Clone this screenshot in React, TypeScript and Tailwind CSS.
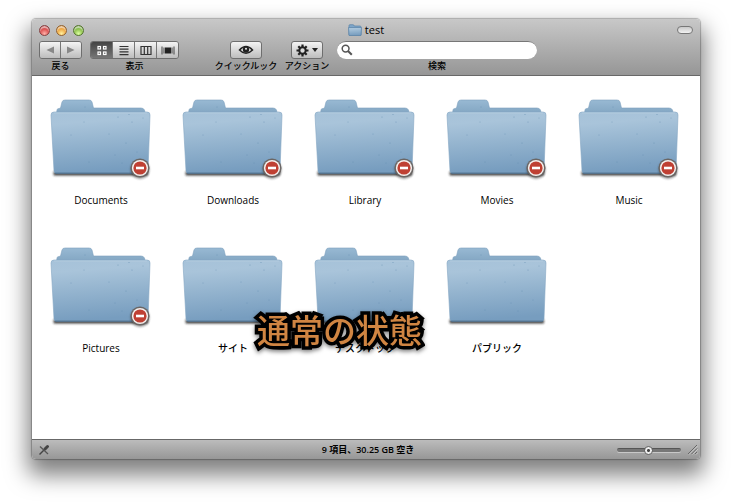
import type { ReactNode } from 'react';

type Item = { name: string; locked?: boolean };

const items: Item[] = [
  { name: 'Documents', locked: true },
  { name: 'Downloads', locked: true },
  { name: 'Library', locked: true },
  { name: 'Movies', locked: true },
  { name: 'Music', locked: true },
  { name: 'Pictures', locked: true },
  { name: 'サイト' },
  { name: 'デスクトップ' },
  { name: 'パブリック' },
];

const buttonLook =
  'flex h-[18px] items-center justify-center bg-linear-to-b from-[#f4f4f4] to-[#bdbdbd]';

function FolderDefs() {
  return (
    <svg className="absolute size-0" aria-hidden="true">
      <defs>
        <linearGradient id="front" x1="0" y1="0" x2="0.12" y2="1">
          <stop offset="0" stopColor="#a6c2d9" />
          <stop offset="0.2" stopColor="#a9c4da" />
          <stop offset="0.55" stopColor="#93b3ce" />
          <stop offset="1" stopColor="#779dbf" />
        </linearGradient>
        <linearGradient id="back" x1="0" y1="0" x2="0" y2="1">
          <stop offset="0" stopColor="#98b9d3" />
          <stop offset="0.2" stopColor="#86a9c5" />
          <stop offset="1" stopColor="#6f95b8" />
        </linearGradient>
        <filter id="soft" x="-10%" y="-200%" width="120%" height="500%">
          <feGaussianBlur stdDeviation="1" />
        </filter>
      </defs>
    </svg>
  );
}

function Folder({ locked }: { locked?: boolean }) {
  return (
    <svg width="104" height="88" viewBox="0 0 104 88" aria-hidden="true">
      <rect x="4.500" y="74.500" width="94.500" height="4" rx="1" fill="#222" opacity="0.85" filter="url(#soft)" />
      <path
        d="M7 20 8 13Q8 11.500 10 11.500L11.500 11 13 5Q13.500 3 16 3H40Q42.500 3 43 5L44.500 11H92Q94.500 11 95.500 13L97 20V60H7Z"
        fill="url(#back)"
        stroke="#7c9fbd"
        strokeWidth="0.6"
      />
      <path
        d="M5 15H98Q101.200 15 101 18L99 74Q98.800 76.500 96 76.500H7.500Q5.200 76.500 5 74L2 18Q2 15 5 15Z"
        fill="url(#front)"
        stroke="#84a6c3"
        strokeWidth="0.6"
      />
      <path d="M5 16H98" stroke="#b6cee0" strokeWidth="0.8" />
      <path d="M6 76.200H98" stroke="#46647f" strokeWidth="1" />
      <g fill="#547fa5" opacity="0.55">
        <circle cx="36" cy="10" r="0.500" />
        <circle cx="80" cy="17.500" r="0.600" />
        <circle cx="69" cy="20" r="0.600" />
        <circle cx="83" cy="25" r="0.600" />
        <circle cx="94" cy="21" r="0.500" />
        <circle cx="35" cy="25" r="0.500" />
        <circle cx="22" cy="38" r="0.500" />
        <circle cx="60" cy="37" r="0.500" />
        <circle cx="77" cy="46" r="0.600" />
        <circle cx="66" cy="58" r="0.500" />
        <circle cx="88" cy="55" r="0.500" />
        <circle cx="40" cy="65" r="0.500" />
        <circle cx="73" cy="66" r="0.500" />
      </g>
      {locked && (
        <g>
          <circle cx="91" cy="72.500" r="9.500" fill="#222" opacity="0.45" filter="url(#soft)" />
          <circle cx="91" cy="71" r="9.600" fill="#6b6664" />
          <circle cx="91" cy="71" r="8.100" fill="#f4f0ee" />
          <circle cx="91" cy="71" r="6.600" fill="#bf4033" />
          <rect x="87" y="69.700" width="8" height="2.600" fill="#fff" />
        </g>
      )}
    </svg>
  );
}

function Group({ label, className, children }: { label: string; className: string; children: ReactNode }) {
  return (
    <div className={`flex flex-col items-center ${className}`}>
      {children}
      <span className="mt-px whitespace-nowrap text-[9px] leading-3">{label}</span>
    </div>
  );
}

const viewIcons = [
  {
    label: 'アイコン',
    icon: (
      <g fill="none" stroke="#fff" strokeWidth="1.2">
        <rect x="3" y="1.500" width="2.500" height="2.500" />
        <rect x="8.500" y="1.500" width="2.500" height="2.500" />
        <rect x="3" y="7" width="2.500" height="2.500" />
        <rect x="8.500" y="7" width="2.500" height="2.500" />
      </g>
    ),
  },
  {
    label: 'リスト',
    icon: <path d="M2.500 1.500h9M2.500 4.200h9M2.500 6.900h9M2.500 9.600h9" stroke="#333" strokeWidth="1.200" />,
  },
  {
    label: 'カラム',
    icon: <path d="M2 1.500h10v8H2zM5.300 1.500v8M8.700 1.500v8" fill="none" stroke="#333" strokeWidth="1.200" />,
  },
  {
    label: 'Cover Flow',
    icon: (
      <g>
        <path d="M1 1.500v8M3 2.500v6M11 2.500v6M13 1.500v8" stroke="#444" strokeWidth="1" />
        <rect x="4" y="2.500" width="6" height="6" fill="#222" />
      </g>
    ),
  },
];

function Toolbar() {
  return (
    <header className="rounded-t border-b border-[#686868] bg-linear-to-b from-[#c8c8c8] to-[#969696] pb-[3px]">
      <div className="grid h-[22px] grid-cols-[1fr_auto_1fr] items-center px-[7px]">
        <div className="flex gap-[6px]">
          <button aria-label="閉じる" className="size-[11px] rounded-full border border-[#854242] bg-[radial-gradient(circle_at_50%_85%,#ffb0a8,#d94b4b_55%,#a33030)] shadow-[inset_0_2px_1px_rgba(255,255,255,0.6)]" />
          <button aria-label="しまう" className="size-[11px] rounded-full border border-[#936330] bg-[radial-gradient(circle_at_50%_85%,#fff0a0,#efa53d_55%,#b86c22)] shadow-[inset_0_2px_1px_rgba(255,255,255,0.6)]" />
          <button aria-label="拡大" className="size-[11px] rounded-full border border-[#55752f] bg-[radial-gradient(circle_at_50%_85%,#dcffa0,#88bd48_55%,#527f2a)] shadow-[inset_0_2px_1px_rgba(255,255,255,0.6)]" />
        </div>
        <h1 className="flex items-center gap-[3px] text-[11px] leading-[14px]">
          <svg width="14" height="12" viewBox="0 0 14 12" aria-hidden="true">
            <path d="M1 3V1.500Q1 .7 2 .7H5Q6 .7 6.300 2H12Q13 2 13 3V11H1Z" fill="#7ea6c9" stroke="#5983a8" strokeWidth="0.700" />
            <path d="M.5 3.500H13.500L13 11.500H1Z" fill="url(#front)" stroke="#5983a8" strokeWidth="0.700" />
          </svg>
          test
        </h1>
        <button
          aria-label="ツールバーを隠す"
          className="h-2 w-4 justify-self-end rounded-full border border-[#777] bg-linear-to-b from-[#c9c9c9] to-[#f2f2f2]"
        />
      </div>

      <div className="flex gap-2 px-[7px]">
        <Group label="戻る" className="w-[43px]">
          <div className="flex w-full divide-x divide-[#777] overflow-hidden rounded-[3px] border border-[#6e6e6e]">
            <button aria-label="戻る" className={`${buttonLook} h-4! flex-1`}>
              <svg width="8" height="8" viewBox="0 0 8 8"><path d="M8 .5v7L.5 4z" fill="#888" /></svg>
            </button>
            <button aria-label="進む" className={`${buttonLook} h-4! flex-1`}>
              <svg width="8" height="8" viewBox="0 0 8 8"><path d="M0 .5v7L7.500 4z" fill="#888" /></svg>
            </button>
          </div>
        </Group>
        <Group label="表示" className="w-[89px]">
          <div className="flex w-full divide-x divide-[#777] overflow-hidden rounded-[3px] border border-[#6e6e6e]">
            {viewIcons.map((view, i) => (
              <button
                key={view.label}
                aria-label={view.label}
                aria-pressed={i === 0}
                className={
                  i === 0
                    ? 'flex h-4 flex-1 items-center justify-center bg-linear-to-b from-[#444] to-[#777]'
                    : `${buttonLook} h-4! flex-1`
                }
              >
                <svg width="14" height="11" viewBox="0 0 14 11">{view.icon}</svg>
              </button>
            ))}
          </div>
        </Group>
        <Group label="クイックルック" className="ml-7 w-[62px]">
          <button aria-label="クイックルック" className={`${buttonLook} w-8 rounded-[3px] border border-[#6e6e6e]`}>
            <svg width="16" height="12" viewBox="0 0 16 12">
              <path d="M1.500 6Q8-1 14.500 6Q8 12.500 1.500 6Z" fill="#eee" stroke="#222" strokeWidth="1.500" />
              <circle cx="8" cy="5.600" r="3.200" fill="#222" />
              <circle cx="8" cy="4.700" r="1" fill="#eee" />
            </svg>
          </button>
        </Group>
        <Group label="アクション" className="w-11">
          <button aria-label="アクション" className={`${buttonLook} w-8 gap-[3px] rounded-[3px] border border-[#6e6e6e]`}>
            <svg width="13" height="13" viewBox="0 0 13 13">
              <g stroke="#222" strokeWidth="2.200">
                <path d="M6.500 .5v12M.5 6.500h12M2.300 2.300l8.400 8.400M10.700 2.300l-8.400 8.400" />
              </g>
              <circle cx="6.500" cy="6.500" r="3.200" fill="#dcdcdc" stroke="#222" strokeWidth="2" />
            </svg>
            <svg width="6" height="4" viewBox="0 0 6 4"><path d="M0 0h6L3 4z" fill="#222" /></svg>
          </button>
        </Group>
        <div className="flex max-w-[200px] flex-1 flex-col items-center">
          <div className="relative w-full">
            <svg className="absolute top-[3px] left-1" width="12" height="12" viewBox="0 0 12 12" aria-hidden="true">
              <circle cx="4.600" cy="4.600" r="3.400" fill="none" stroke="#555" strokeWidth="1.500" />
              <path d="M7 7l3.800 3.800" stroke="#555" strokeWidth="2" />
            </svg>
            <input
              id="search"
              type="search"
              className="block h-[18px] w-full rounded-full border-t border-[#777] bg-white pr-2 pl-5 text-[11px] outline-none"
            />
          </div>
          <label htmlFor="search" className="mt-px text-[9px] leading-3">検索</label>
        </div>
      </div>
    </header>
  );
}

function StatusBar() {
  return (
    <footer className="grid h-5 grid-cols-[1fr_auto_1fr] items-center rounded-b border-t border-[#686868] bg-linear-to-b from-[#bcbcbc] to-[#979797] pr-[2px] pl-1.5">
      <svg width="12" height="12" viewBox="0 0 12 12" aria-hidden="true">
        <path d="M1.500 10.500 9 3" stroke="#444" strokeWidth="1.500" />
        <path d="M7 5 9.500 2.500" stroke="#444" strokeWidth="3" strokeLinecap="round" />
        <path d="M2 2.500 10 10" stroke="#555" strokeWidth="1.200" />
      </svg>
      <p className="text-[9px] leading-3 font-semibold">9 項目、30.25 GB 空き</p>
      <div className="flex items-center justify-end gap-[6px]">
        <input
          type="range"
          aria-label="アイコンサイズ"
          defaultValue={49}
          className="h-1 w-16 appearance-none rounded-full border-t border-[#555] bg-[#777] shadow-[0_1px_0_rgba(255,255,255,0.4)] [&::-webkit-slider-thumb]:size-[9px] [&::-webkit-slider-thumb]:appearance-none [&::-webkit-slider-thumb]:rounded-full [&::-webkit-slider-thumb]:border [&::-webkit-slider-thumb]:border-[#666] [&::-webkit-slider-thumb]:bg-[radial-gradient(circle,#444_1px,#eee_2px)]"
        />
        <svg width="11" height="11" viewBox="0 0 11 11" aria-hidden="true">
          <path d="M1 10l9-9M4.500 10 10 4.500M8 10l2-2" stroke="#666" />
          <path d="M2 10.500l9-9M5.500 10.500 11 5M9 10.500l2-2" stroke="#ddd" strokeWidth="0.600" />
        </svg>
      </div>
    </footer>
  );
}

export default function App() {
  return (
    <main className="bg-white px-8 pt-[19px] pb-11 font-['Open_Sans','Noto_Sans_CJK_JP',sans-serif] font-medium text-black">
      <FolderDefs />
      <div className="relative rounded shadow-[0_0_1px_1px_rgba(0,0,0,0.25),0_12px_22px_4px_rgba(0,0,0,0.5)]">
        <Toolbar />
        <ul className="grid grid-cols-[repeat(auto-fill,132px)] gap-y-[38px] bg-white pt-[21px] pr-[5px] pb-[84px] pl-[3px]">
          {items.map((item) => (
            <li key={item.name}>
              <button className="flex w-full flex-col items-center gap-2 text-[10px] leading-[14px]">
                <Folder locked={item.locked} />
                {item.name}
              </button>
            </li>
          ))}
        </ul>
        <StatusBar />
        <p className="absolute top-[286px] left-[225px] whitespace-nowrap font-['Noto_Sans_CJK_JP',sans-serif] text-[33px] leading-[48px] font-medium text-[#d08542] drop-shadow-[0_2px_2px_rgba(0,0,0,0.5)] [-webkit-text-stroke:7px_black] [paint-order:stroke_fill] [stroke-linejoin:round]">
          通常の状態
        </p>
      </div>
    </main>
  );
}
